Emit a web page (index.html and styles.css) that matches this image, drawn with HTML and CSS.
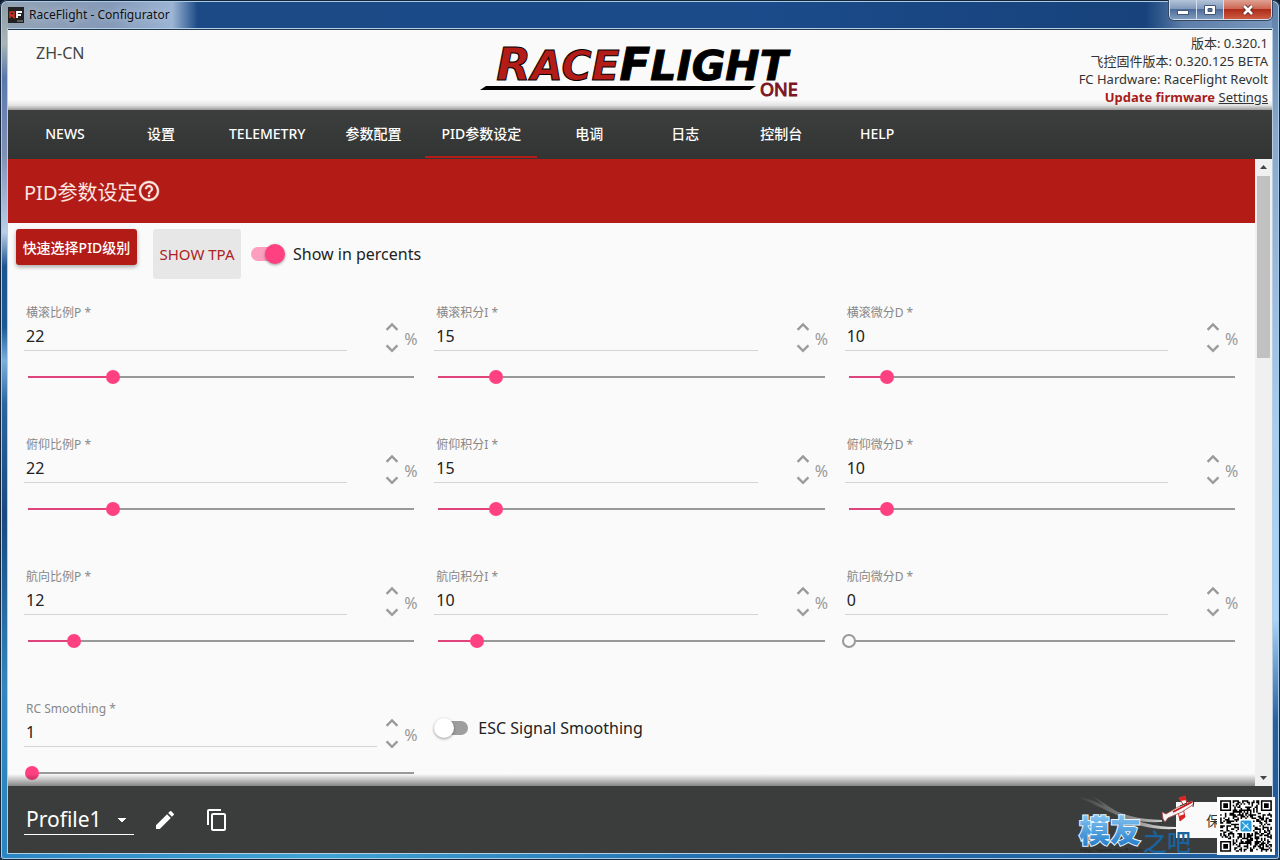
FILE: index.html
```html
<!DOCTYPE html>
<html lang="zh-CN">
<head>
<meta charset="utf-8">
<title>RaceFlight - Configurator</title>
<link rel="stylesheet" href="styles.css">
</head>
<body>
<svg class="defs" aria-hidden="true">
  <symbol id="up" viewBox="1 1 22 22"><path d="M7.400 15.400 12 10.800l4.600 4.600L18 14l-6-6-6 6z"/></symbol>
  <symbol id="down" viewBox="1 1 22 22"><path d="M7.400 7.800 12 12.400l4.600-4.600L18 9.200l-6 6-6-6z"/></symbol>
</svg>
<div class="window">
  <div class="titlebar">
    <svg class="app-icon" viewBox="0 0 16 16" aria-hidden="true">
      <rect width="16" height="16" fill="#222"/>
      <path d="M2 11V5h4v3H3l4 3" fill="none" stroke="#c32" stroke-width="1.600"/>
      <path d="M9 11V5h5M9 8h4" fill="none" stroke="#fff" stroke-width="1.800"/>
      <path d="M9 14h6" stroke="#999"/>
    </svg>
    <span class="title">RaceFlight - Configurator</span>
    <div class="win-buttons">
      <button class="wb" aria-label="Minimize"><svg viewBox="0 0 14 12"><rect x="1.500" y="6.500" width="11" height="4" fill="#fff" stroke="#44587a"/></svg></button>
      <button class="wb" aria-label="Maximize"><svg viewBox="0 0 14 12"><path d="M1.500 1.500h11v9h-11zM5 4.500v3h4v-3z" fill="#fff" fill-rule="evenodd" stroke="#44587a"/></svg></button>
      <button class="wb close" aria-label="Close"><svg viewBox="0 0 14 12"><path d="M3 2l8 8M11 2l-8 8" stroke="#5b2a2a" stroke-width="4.500"/><path d="M3 2l8 8M11 2l-8 8" stroke="#fff" stroke-width="2.600"/></svg></button>
    </div>
  </div>
  <div class="app">
    <header class="header">
      <div class="lang">ZH-CN</div>
      <svg class="logo" viewBox="0 0 332 52" role="img" aria-label="RaceFlight One">
        <text class="word" x="168" y="33" text-anchor="middle"><tspan class="race cap">R</tspan><tspan class="race">ACE</tspan><tspan class="cap">F</tspan>LIGHT</text>
        <path d="M12 39H282L276 43H6z"/>
        <text class="one" x="286" y="49">ONE</text>
      </svg>
      <div class="info">
        <div>版本: 0.320.1</div>
        <div>飞控固件版本: 0.320.125 BETA</div>
        <div>FC Hardware: RaceFlight Revolt</div>
        <div><a class="update" href="#">Update firmware</a> <a class="settings" href="#">Settings</a></div>
      </div>
    </header>
    <nav class="nav">
      <a href="#">NEWS</a><a href="#">设置</a><a href="#">TELEMETRY</a><a href="#">参数配置</a><a href="#" class="active">PID参数设定</a><a href="#">电调</a><a href="#">日志</a><a href="#">控制台</a><a href="#">HELP</a>
    </nav>
    <div class="body">
      <main class="main">
        <h1 class="page-title">PID参数设定<svg viewBox="0 0 24 24" aria-hidden="true"><path d="M11 18h2v-2h-2v2zm1-16C6.480 2 2 6.480 2 12s4.480 10 10 10 10-4.480 10-10S17.520 2 12 2zm0 18c-4.410 0-8-3.590-8-8s3.590-8 8-8 8 3.590 8 8-3.590 8-8 8zm0-14c-2.210 0-4 1.790-4 4h2c0-1.100.9-2 2-2s2 .9 2 2c0 2-3 1.750-3 5h2c0-2.250 3-2.500 3-5 0-2.210-1.790-4-4-4z"/></svg></h1>
        <div class="actions">
          <button class="primary">快速选择PID级别</button>
          <button class="flat">SHOW TPA</button>
          <label class="switch"><input type="checkbox" checked><span>Show in percents</span></label>
        </div>
        <div class="grid" id="grid"></div>
      </main>
      <div class="scroll" aria-hidden="true">
        <svg viewBox="0 0 17 17"><path d="M5 10l3.500-4 3.500 4z"/></svg>
        <div class="thumb"></div>
        <svg class="end" viewBox="0 0 17 17"><path d="M5 7l3.500 4 3.500-4z"/></svg>
      </div>
    </div>
    <footer class="footer">
      <select class="profile" aria-label="Profile"><option>Profile1</option></select>
      <button class="icon" aria-label="Edit"><svg viewBox="0 0 24 24"><path d="M3 17.250V21h3.750L17.810 9.940l-3.750-3.750L3 17.250zM20.710 7.040a1 1 0 0 0 0-1.410l-2.340-2.340a1 1 0 0 0-1.410 0l-1.830 1.830 3.750 3.750 1.830-1.830z"/></svg></button>
      <button class="icon" aria-label="Copy"><svg viewBox="0 0 24 24"><path d="M16 1H4c-1.100 0-2 .9-2 2v14h2V3h12V1zm3 4H8c-1.100 0-2 .9-2 2v14c0 1.100.9 2 2 2h11c1.100 0 2-.9 2-2V7c0-1.100-.9-2-2-2zm0 16H8V7h11v14z"/></svg></button>
      <button class="save">保存</button>
    </footer>
  </div>
  <div class="watermark">
    <svg class="mark" viewBox="0 0 145 60" role="img" aria-label="模友之吧">
      <defs>
        <linearGradient id="sw"><stop offset="0" stop-color="#aaa" stop-opacity="0"/><stop offset=".6" stop-color="#bbb" stop-opacity=".7"/><stop offset="1" stop-color="#eee"/></linearGradient>
        <linearGradient id="bl" x2="0" y2="1"><stop offset="0" stop-color="#9fd8fc"/><stop offset="1" stop-color="#1873c4"/></linearGradient>
      </defs>
      <path d="M6 2C35 4 42 24 92 25l0 2C50 29 36 12 6 2zM22 1C45 14 60 31 106 32v2C58 36 42 16 22 1z" fill="url(#sw)"/>
      <text class="wm-url" x="10" y="57">http://www.moz8.com</text>
      <text class="wm-big" x="9" y="47">模友</text>
      <text class="wm-small" x="73" y="56">之吧</text>
      <path d="M109 3l6-2 2 8-3 2zM108 16l5-3 2 9-5 4z" fill="#f8f8f8" stroke="#c33" stroke-width="1"/>
      <path d="M109 3l6-2 1 4-6 1zM109 21l6-2v3l-5 4z" fill="#d22"/>
      <path d="M92 17l4 2 12-7 14-6 2 3-12 8-14 6-3 4-2-3z" fill="#f4f4f4" stroke="#a44" stroke-width=".8"/>
      <path d="M103 17l19-10" stroke="#c11" stroke-width="1.600"/>
      <path d="M110 11l7-3M124 4l-1 8" stroke="#333" stroke-width="1"/>
    </svg>
    <svg class="qr" viewBox="-2 -2 37 37" role="img" aria-label="QR">
      <rect x="-2" y="-2" width="37" height="37" fill="#fff"/>
      <path id="modules"/>
      <rect x="12" y="12" width="9" height="9" fill="#fff"/>
      <rect x="13" y="13" width="7" height="7" rx="1" fill="#279bdb"/>
      <path d="M14 14l5 5M14 19l4-4M15 17h3" stroke="#d8f0ff" stroke-width=".7"/>
    </svg>
  </div>
</div>
<script src="script.js"></script>
</body>
</html>
```
FILE: styles.css
```css
* { box-sizing: border-box; }
body {
  margin: 0;
  height: 100vh;
  background: #0c1d33;
  font-family: "Noto Sans", "Noto Sans CJK SC", sans-serif;
  color: #333;
}
button, input, select { font: inherit; color: inherit; margin: 0; padding: 0; border: 0; background: none; }
a { color: inherit; }
.defs { display: none; }
.window {
  position: relative;
  height: 100vh;
  display: flex;
  flex-direction: column;
  padding: 0 8px 7px;
  border-radius: 7px 7px 4px 4px;
  background:
    linear-gradient(90deg, #2b86c4, #3fa3d4 25%, #2470b0 55%, #205a9a) bottom / 100% 8px no-repeat,
    linear-gradient(#8b9aa8, #a9b6b4 5%, #5a78ae 9%, #8091b8 18%, #b9cfe8 27%, #1d5590 31%, #1c5a94 38%, #7ab0dc 42%, #2b659e 47%, #184a80 60%, #3486bd 80%, #2a86c0) left / 8px 100% no-repeat,
    linear-gradient(#5d7fa9, #8ba5c8 15%, #a6cdf2 50%, #a8d4fa 72%, #2b5f9c 84%, #1c5596) right / 8px 100% no-repeat,
    #1b4a86;
  box-shadow: inset 0 0 0 1px #16263a, inset 0 0 0 2px #a9cbe6;
}
.titlebar {
  display: flex;
  align-items: flex-start;
  height: 29px;
  margin: 2px 0 -2px;
  background: linear-gradient(90deg, #93a3b5, #8599b8 8%, #9cb4d4 13%, #1b4a86 15%, #1b4b8a 60%, #17427b 90%, #5c7ea9 93%, #7a97bd);
}
.app-icon { width: 16px; height: 16px; margin-top: 5px; }
.title { margin: 5px 0 0 5px; font-size: 12px; line-height: 16px; color: #111; text-shadow: 0 0 6px #c6d6e6; }
.win-buttons {
  display: flex;
  margin: -2px 0 0 auto;
  border: 1px solid #d5deea;
  border-top: 0;
  border-radius: 0 0 5px 5px;
  overflow: hidden;
  box-shadow: 0 0 0 1px #33475f;
}
.wb { display: grid; place-items: center; width: 27px; height: 19px; background: linear-gradient(#b4c4d9, #8098ba 48%, #4d6c98 50%, #7f9bbf); border-right: 1px solid #d5deea; }
.wb svg { width: 14px; height: 12px; }
.wb.close { width: 47px; border: 0; background: linear-gradient(#dfa193, #cc6450 48%, #ad2c1a 50%, #ce5b41); }
.app {
  flex: 1;
  min-height: 0;
  display: flex;
  flex-direction: column;
  background: #fafafa;
  border-top: 1px solid #24384f;
  box-shadow: 0 0 0 1px #b4cee4;
}
.header {
  display: grid;
  grid-template-columns: 1fr 332px 1fr;
  height: 80px;
  background: linear-gradient(#fafafa 87%, #e4e4e4 94%, #9a9a9a);
}
.lang { padding: 13px 28px; font-size: 16px; line-height: 20px; color: #444; }
.logo { width: 332px; height: 52px; margin-top: 17px; overflow: visible; }
.word { font: italic bold 41px "DejaVu Sans", sans-serif; stroke: #000; stroke-width: 1; }
.word .cap { font-size: 45px; }
.race { fill: #b41c17; }
.one { font-size: 18px; fill: #7d1522; stroke: #7d1522; stroke-width: 1; }
.info { padding: 4px 4px 0 0; text-align: right; font-size: 13px; line-height: 18px; white-space: nowrap; }
.update { color: #a81c1c; font-weight: bold; text-decoration: none; }
.nav {
  display: flex;
  gap: 8px;
  height: 49px;
  padding: 0 13px;
  background: linear-gradient(#3d3f3e, #323433);
  color: #fff;
  font-size: 14px;
  font-weight: 500;
  line-height: 47px;
}
.nav a { min-width: 88px; padding: 0 16px; text-align: center; text-decoration: none; white-space: nowrap; }
.nav .active { border-bottom: 2px solid #b41c17; margin-bottom: 1px; }
.body { flex: 1; min-height: 0; display: flex; position: relative; }
.body::after { content: ""; position: absolute; left: 0; right: 17px; bottom: 0; height: 12px; background: linear-gradient(transparent, #0007); }
.main { flex: 1; overflow: hidden; }
.page-title {
  display: flex;
  align-items: center;
  height: 64px;
  margin: 0;
  padding: 0 16px;
  background: #b31b17;
  color: #fbe6e0;
  font-size: 20px;
  font-weight: 400;
}
.page-title svg { width: 24px; height: 24px; fill: currentColor; stroke: currentColor; stroke-width: 0.4; }
.actions { display: flex; align-items: flex-start; height: 72px; padding: 6px 8px 0; }
.primary { width: 121px; height: 36px; border-radius: 3px; background: #b31b17; color: #fff; font-size: 14px; font-weight: 500; box-shadow: 0 2px 4px #0005; white-space: nowrap; }
.flat { width: 88px; height: 50px; margin: 0 9px 0 16px; border-radius: 3px; background: #e7e7e7; color: #ab2323; font-size: 15px; }
.switch { display: flex; align-items: center; gap: 8px; height: 50px; font-size: 16px; color: #222; }
.switch input { appearance: none; position: relative; width: 35px; height: 20px; }
.switch input::before { content: ""; position: absolute; inset: 3px 1px; border-radius: 7px; background: #9e9e9e; }
.switch input::after { content: ""; position: absolute; top: 0; left: 0; width: 20px; height: 20px; border-radius: 50%; background: #fff; box-shadow: 0 1px 3px #0006; }
.switch input:checked::before { background: #ff9fbf; }
.switch input:checked::after { left: 15px; background: #ff4081; }
.grid { display: grid; grid-template-columns: repeat(3, 1fr); padding: 0 8px; }
.cell { height: 132px; padding: 8px 8px 0; }
.cell > .switch { margin-top: 4px; gap: 9px; }
.field { display: grid; grid-template-columns: 1fr 33px 24px 14px; height: 53px; }
.field.wide { grid-template-columns: 1fr 3px 24px 14px; }
.field .text { border-bottom: 1px solid #d4d4d4; height: 48px; }
.text label { display: block; padding: 1px 0 0 2px; font-size: 12px; line-height: 18px; color: #888; }
.text input { display: block; width: 100%; padding-left: 2px; height: 28px; font-size: 16px; line-height: 24px; color: #222; outline: 0; }
.spin { grid-column: 3; display: flex; flex-direction: column; padding-top: 13px; }
.spin button { height: 22px; width: 24px; }
.spin svg { display: block; width: 24px; height: 22px; fill: #999; stroke: #999; stroke-width: 0.5; }
.unit { padding-top: 24px; font-size: 16px; line-height: 24px; color: #999; }
.slider { appearance: none; display: block; width: calc(100% + 6px); height: 14px; margin: 14px -3px 0; --fill: #e0447c; }
.slider::-webkit-slider-runnable-track {
  height: 14px;
  padding: 0;
  background:
    linear-gradient(var(--fill), var(--fill)) 7px 6px / calc((100% - 14px) * var(--v) / 100) 2px no-repeat,
    linear-gradient(90deg, transparent 7px, #999 7px calc(100% - 7px), transparent calc(100% - 7px)) 0 6px / 100% 2px no-repeat;
}
.slider::-webkit-slider-thumb { appearance: none; width: 14px; height: 14px; border-radius: 50%; background: #ff4081; }
.slider.zero::-webkit-slider-thumb { background: #fafafa; border: 2px solid #999; }
.scroll { width: 17px; display: flex; flex-direction: column; background: #f0f0f0; }
.scroll svg { width: 17px; height: 17px; fill: #444; flex: none; }
.scroll .thumb { height: 29%; margin: 0 2px; background: #c1c1c1; }
.scroll .end { margin-top: auto; }
.footer { display: flex; align-items: center; height: 67px; padding: 0 16px; background: #3b3d3c; color: #fff; }
.profile {
  appearance: none;
  width: 110px;
  height: 30px;
  padding-left: 2px;
  border-bottom: 1px solid #fff;
  font-size: 21px;
  line-height: 28px;
  background: conic-gradient(from -45deg at 50% 100%, #fff 90deg, transparent 0) 93px 13px / 10px 5px no-repeat;
}
.icon { width: 24px; height: 24px; margin-left: 19px; }
.icon + .icon { margin-left: 28px; }
.icon svg { display: block; width: 24px; height: 24px; fill: #fff; }
.save { width: 80px; height: 36px; margin-left: auto; padding-left: 8px; background: #fafafa; color: #333; font-size: 14px; }
.watermark { position: absolute; right: 5px; bottom: 5px; display: flex; align-items: flex-end; }
.mark { width: 145px; height: 60px; margin-right: 2px; }
.qr { position: relative; width: 58px; height: 58px; }
.wm-big { font: 900 31px "Noto Sans CJK SC", sans-serif; fill: url(#bl); stroke: #e8f6ff; stroke-width: 2; paint-order: stroke; }
.wm-small { font: 500 24px "Noto Sans CJK SC", sans-serif; fill: #19639f; }
.wm-url { font-size: 6px; fill: #222; }
```
FILE: script.js
```js
const fields = [
  ['横滚比例P', 22], ['横滚积分I', 15], ['横滚微分D', 10],
  ['俯仰比例P', 22], ['俯仰积分I', 15], ['俯仰微分D', 10],
  ['航向比例P', 12], ['航向积分I', 10], ['航向微分D', 0],
  ['RC Smoothing', 1]
];
document.getElementById('grid').innerHTML = fields.map(([name, v], i) => `
  <div class="cell">
    <div class="field${i === 9 ? ' wide' : ''}">
      <div class="text"><label for="f${i}">${name} *</label><input id="f${i}" type="text" inputmode="numeric" value="${v}"></div>
      <div class="spin">
        <button aria-label="${name} +"><svg><use href="#up"/></svg></button>
        <button aria-label="${name} -"><svg><use href="#down"/></svg></button>
      </div>
      <div class="unit">%</div>
    </div>
    <input class="slider${v ? '' : ' zero'}" type="range" aria-label="${name}" min="0" max="100" value="${v}" style="--v:${v}">
  </div>`).join('') +
  '<div class="cell"><label class="switch"><input type="checkbox"><span>ESC Signal Smoothing</span></label></div>';

// QR modules: three finder squares and a fixed pseudo-random fill
const N = 33;
let seed = 7, d = '';
const finder = (x, y) => {
  for (const [ox, oy] of [[0, 0], [N - 7, 0], [0, N - 7]]) {
    const a = x - ox, b = y - oy;
    if (a >= -1 && a <= 7 && b >= -1 && b <= 7) {
      const r = Math.max(Math.abs(a - 3), Math.abs(b - 3));
      return r === 3 || r < 2;
    }
  }
  return null;
};
for (let y = 0; y < N; y++) for (let x = 0; x < N; x++) {
  seed = (seed * 1103515245 + 12345) % 2147483648;
  const f = finder(x, y);
  if (f === null ? (seed >> 16) & 1 : f) d += `M${x} ${y}h1v1h-1z`;
}
document.getElementById('modules').setAttribute('d', d);
```
